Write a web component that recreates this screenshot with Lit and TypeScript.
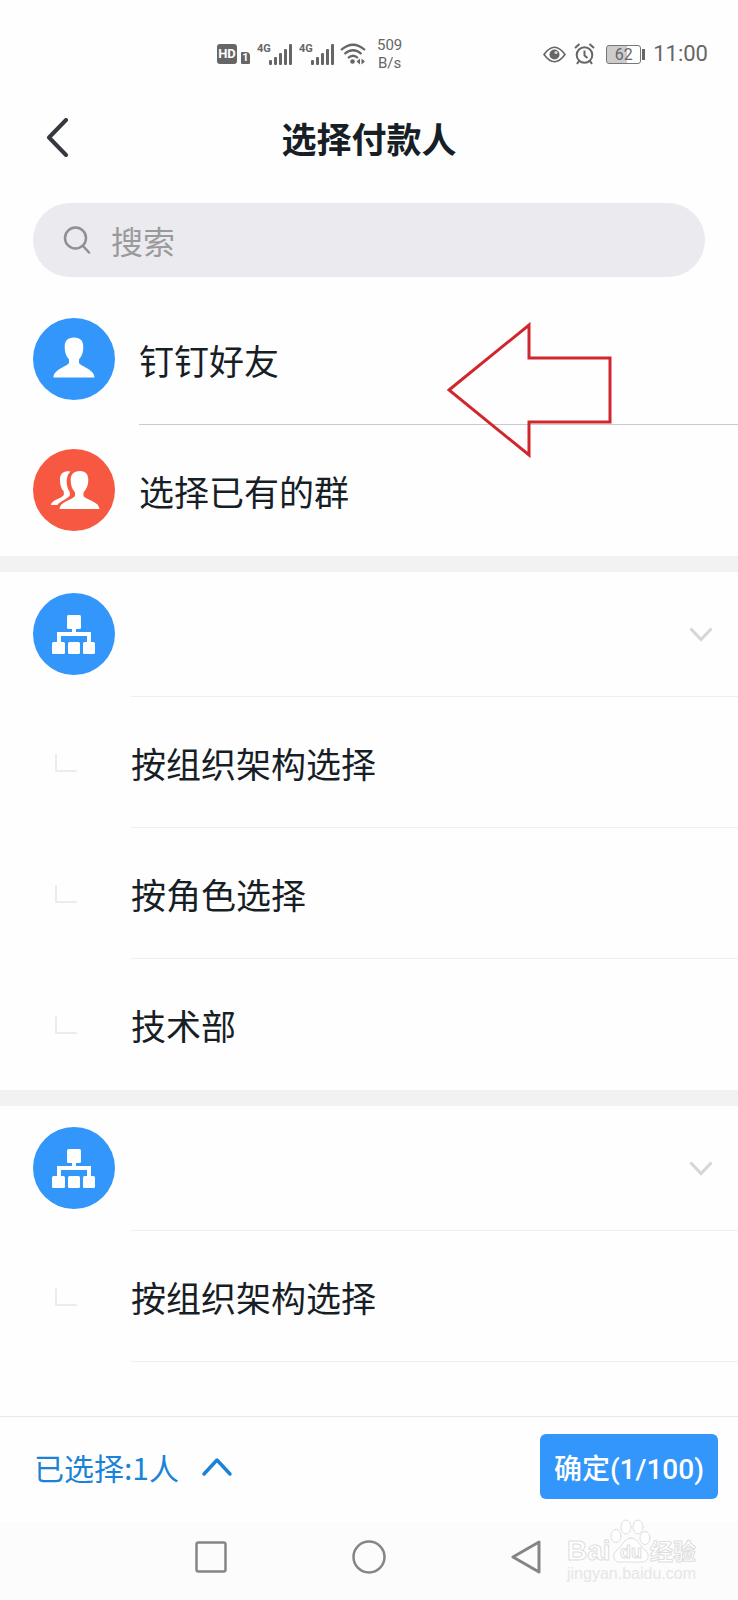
import { LitElement, html, css, svg } from "lit";
import { customElement, state } from "lit/decorators.js";

interface Group {
  id: string;
  items: string[];
}

const GROUPS: Group[] = [
  { id: "org-1", items: ["按组织架构选择", "按角色选择", "技术部"] },
  { id: "org-2", items: ["按组织架构选择"] },
];

const signalBars = svg`
  <rect x="0" y="16" width="3" height="5" rx="1" />
  <rect x="5" y="13" width="3" height="8" rx="1" />
  <rect x="10" y="9" width="3" height="12" rx="1" />
  <rect x="15" y="5" width="3" height="16" rx="1" />
  <rect x="20" y="0" width="3" height="21" rx="1" />
`;

@customElement("status-bar")
export class StatusBar extends LitElement {
  static styles = css`
    :host {
      display: flex;
      align-items: center;
      justify-content: space-between;
      height: 108px;
      padding: 0 30px 0 217px;
      box-sizing: border-box;
      color: #666;
      font-family: Roboto, sans-serif;
    }
    .side {
      display: flex;
      align-items: center;
    }
    svg {
      display: block;
      fill: currentColor;
    }
    .hd {
      display: flex;
      align-items: flex-end;
      gap: 4px;
    }
    .hd-box {
      width: 20px;
      height: 20px;
      line-height: 20px;
      border-radius: 3px;
      background: #666;
      color: #fff;
      font-size: 13px;
      font-weight: 700;
      text-align: center;
    }
    .sim {
      width: 9px;
      height: 12px;
      line-height: 12px;
      border-radius: 1px 4px 1px 1px;
      background: #666;
      color: #fff;
      font-size: 11px;
      font-weight: 700;
      text-align: center;
    }
    .signal {
      display: flex;
      margin-left: 7px;
    }
    .gen {
      width: 12px;
      font-size: 11px;
      line-height: 10px;
      font-weight: 700;
      white-space: nowrap;
    }
    .wifi {
      margin-left: 6px;
    }
    .rate {
      margin-left: 11px;
      font-size: 15px;
      line-height: 18px;
      text-align: center;
    }
    .battery {
      display: flex;
      align-items: center;
      gap: 1px;
      margin: 0 8px 0 11px;
    }
    .cell {
      width: 33px;
      height: 17px;
      line-height: 17px;
      border: 1px solid #777;
      border-radius: 3px;
      background: linear-gradient(90deg, #ccc 60%, transparent 60%);
      font-size: 16px;
      text-align: center;
    }
    .cap {
      width: 3px;
      height: 11px;
      background: #666;
    }
    .alarm {
      margin-left: 8px;
    }
    .time {
      font-size: 22px;
      line-height: 28px;
    }
  `;

  render() {
    return html`
      <div class="side">
        <div class="hd"><span class="hd-box">HD</span><span class="sim">1</span></div>
        ${[0, 1].map(
          () => html`<div class="signal">
            <span class="gen">4G</span>
            <svg width="23" height="21" viewBox="0 0 23 21">${signalBars}</svg>
          </div>`
        )}
        <svg class="wifi" width="26" height="22" viewBox="0 0 26 22">
          <g fill="none" stroke="currentColor" stroke-width="2.2">
            <path d="M1 7 Q13 -3.5 25 7" />
            <path d="M4.5 11 Q13 3.5 21.5 11" />
            <path d="M8 15 Q13 10.5 18 15" />
          </g>
          <circle cx="12.5" cy="18.500" r="2.3" />
          <path d="M20 15.500v6l-3.500-3zM21.500 15.500v6l3.500-3z" />
        </svg>
        <div class="rate">509<br />B/s</div>
      </div>
      <div class="side">
        <svg width="23" height="17" viewBox="0 0 23 17">
          <path d="M1 8.500Q11.500-6 22 8.500Q11.500 23 1 8.500z" fill="none" stroke="currentColor" stroke-width="1.6" />
          <circle cx="11.5" cy="8.5" r="5" />
          <circle cx="13" cy="6.5" r="1.5" fill="#ddd" />
        </svg>
        <svg class="alarm" width="21" height="22" viewBox="0 0 21 22">
          <g fill="none" stroke="currentColor" stroke-width="2">
            <circle cx="10.5" cy="12" r="7.8" />
            <path d="M10.500 7.500v5l3 2.500M1 5l4.500-4M20 5l-4.500-4M5 18l-2 3M16 18l2 3" />
          </g>
        </svg>
        <div class="battery"><span class="cell">62</span><span class="cap"></span></div>
        <span class="time">11:00</span>
      </div>
    `;
  }
}

@customElement("round-icon")
export class RoundIcon extends LitElement {
  static properties = { kind: { type: String } };
  declare kind: string;

  static styles = css`
    :host {
      display: block;
      flex: none;
      width: 82px;
      height: 82px;
      margin-bottom: 1px;
    }
    svg {
      display: block;
      fill: #fff;
    }
    .blue {
      fill: #3296fa;
    }
    .red {
      fill: #f65842;
    }
  `;

  private glyph() {
    if (this.kind === "friend") {
      return svg`<path d="M41 19.500c-6.500 0-9.300 3.500-9.300 9.500 0 5.500 1.300 9 4.300 12.500v3.500c-3 4-15.500 6.500-15.500 14.500h41c0-8-12.500-10.500-15.500-14.500v-3.500c3-3.500 4.300-7 4.300-12.500 0-6-2.800-9.500-9.300-9.500z" />`;
    }
    if (this.kind === "group") {
      return svg`
        <path d="M37.500 22.500c-7-1.500-11 2-10.500 9 .2 4.500 1 8 3.800 11v3.500c-2.500 4-12 4.500-13 10h6.500c3-4 9.500-5.500 12.500-9.500v-3.500c-4-5.500-4.500-16 .7-20.500z" />
        <path d="M47 22c-6.500 0-9.300 3.500-9.300 9 0 5.500 1.300 9 4.300 12.500v3.500c-3 4-15 5.500-15.500 13h40c-.5-7.500-13-9-16-13v-3.500c3-3.500 4.800-7 4.800-12.500 0-5.500-2.300-9-8.300-9z" />`;
    }
    return svg`
      <rect x="34" y="22" width="14" height="14" rx="1.5" />
      <path d="M39 35h4v4h15v11h-4v-7H28v7h-4V39h15z" />
      <rect x="19" y="49" width="13" height="12" rx="1.5" />
      <rect x="35" y="49" width="12" height="12" rx="1.5" />
      <rect x="50" y="49" width="12" height="12" rx="1.5" />`;
  }

  render() {
    return html`<svg width="82" height="82" viewBox="0 0 82 82" aria-hidden="true">
      <circle class=${this.kind === "group" ? "red" : "blue"} cx="41" cy="41" r="41" />
      ${this.glyph()}
    </svg>`;
  }
}

@customElement("app-root")
export class AppRoot extends LitElement {
  @state() private query = "";

  static styles = css`
    :host {
      display: flex;
      flex-direction: column;
      position: relative;
      min-height: 100vh;
      background: #fefefe;
      color: #171e26;
      font-family: "Noto Sans CJK SC", sans-serif;
    }
    * {
      box-sizing: border-box;
    }
    button {
      font: inherit;
      color: inherit;
      background: none;
      border: 0;
      padding: 0;
      margin: 0;
      text-align: left;
    }
    svg {
      display: block;
      fill: none;
      stroke-linecap: round;
      stroke-linejoin: round;
    }
    .header {
      display: grid;
      grid-template-columns: 80px 1fr 80px;
      align-items: center;
      height: 60px;
    }
    .back {
      padding-left: 45px;
    }
    .title {
      margin: 0;
      text-align: center;
      font-size: 35px;
      line-height: 60px;
      font-weight: 700;
    }
    .search {
      display: flex;
      align-items: center;
      gap: 20px;
      height: 74px;
      margin: 35px 33px 17px;
      padding: 0 30px;
      border-radius: 37px;
      background: #ebebef;
    }
    .search input {
      flex: 1;
      min-width: 0;
      height: 48px;
      padding: 0;
      border: 0;
      outline: 0;
      background: none;
      color: inherit;
      font: inherit;
      font-size: 32px;
    }
    .search input::placeholder {
      color: #9a9a9d;
      opacity: 1;
    }
    .list {
      flex: 1;
    }
    .row {
      display: flex;
      align-items: center;
      width: 100%;
      height: 131px;
      padding-left: 33px;
      font-size: 35px;
    }
    .label {
      flex: 1;
      align-self: stretch;
      display: flex;
      align-items: center;
      margin-left: 24px;
      border-bottom: 1px solid transparent;
    }
    .ruled {
      border-bottom-color: #cbcbcd;
    }
    .section {
      border-top: 16px solid #f2f2f2;
    }
    .head {
      height: 125px;
    }
    .head .label,
    .item .label {
      margin-left: 16px;
      border-bottom-color: #efefef;
    }
    .head .label {
      justify-content: flex-end;
      padding-right: 25px;
    }
    .item:last-child .label {
      border-bottom-color: transparent;
    }
    .section:last-child .item:last-child .label {
      border-bottom-color: #efefef;
    }
    .elbow {
      width: 82px;
      padding-left: 22px;
    }
    .footer {
      display: flex;
      align-items: center;
      justify-content: space-between;
      height: 106px;
      padding: 0 20px 6px 34px;
      border-top: 1px solid #e9e9ea;
    }
    .picked {
      display: flex;
      align-items: center;
      gap: 22px;
      color: #1a83d8;
      font-size: 30px;
    }
    .confirm {
      height: 65px;
      padding: 0 14px;
      border-radius: 6px;
      background: #3296fa;
      color: #fff;
      font-family: Roboto, "Noto Sans CJK SC", sans-serif;
      font-size: 28px;
      font-weight: 500;
    }
    .nav {
      display: grid;
      grid-template-columns: repeat(3, 158px);
      justify-content: center;
      justify-items: center;
      align-items: center;
      height: 78px;
      padding-bottom: 8px;
      background: #fcfcfc;
    }
    .pointer {
      position: absolute;
      left: 447px;
      top: 322px;
      pointer-events: none;
    }
    .mark {
      position: absolute;
      right: 36px;
      bottom: 16px;
      pointer-events: none;
    }
    .mark text {
      font-family: "Liberation Sans", "Noto Sans CJK SC", sans-serif;
    }
  `;

  private onInput(e: Event) {
    this.query = (e.target as HTMLInputElement).value;
  }

  private renderGroup(group: Group) {
    return html`<section class="section">
      <button class="row head" aria-label="展开">
        <round-icon kind="org"></round-icon>
        <span class="label">
          <svg width="24" height="18" viewBox="0 0 24 18" stroke="#d6d6d6" stroke-width="3">
            <path d="M1.500 3.500L12 14.500L22.500 3.500" stroke-linecap="butt" stroke-linejoin="miter" />
          </svg>
        </span>
      </button>
      ${group.items.map(
        (name) => html`<button class="row item">
          <span class="elbow">
            <svg width="22" height="18" viewBox="0 0 22 18" stroke="#ececec" stroke-width="2">
              <path d="M1 1v16h20" />
            </svg>
          </span>
          <span class="label">${name}</span>
        </button>`
      )}
    </section>`;
  }

  render() {
    return html`
      <status-bar></status-bar>
      <header class="header">
        <button class="back" aria-label="返回">
          <svg width="25" height="40" viewBox="0 0 25 40" stroke="#35393f" stroke-width="4">
            <path d="M21 2L4 19.500l17 17.500" />
          </svg>
        </button>
        <h1 class="title">选择付款人</h1>
      </header>
      <label class="search">
        <svg width="28" height="28" viewBox="0 0 28 28" stroke="#909092" stroke-width="2.5">
          <circle cx="12.5" cy="12" r="10.5" />
          <path d="M20 20l6 6.500" />
        </svg>
        <input type="text" placeholder="搜索" aria-label="搜索" .value=${this.query} @input=${this.onInput} />
      </label>
      <main class="list">
        <button class="row">
          <round-icon kind="friend"></round-icon><span class="label ruled">钉钉好友</span>
        </button>
        <button class="row">
          <round-icon kind="group"></round-icon><span class="label">选择已有的群</span>
        </button>
        ${GROUPS.map((g) => this.renderGroup(g))}
      </main>
      <footer class="footer">
        <button class="picked">
          已选择:1人
          <svg width="32" height="20" viewBox="0 0 32 20" stroke="#1a83d8" stroke-width="3.5">
            <path d="M3 17L16 3l13 14" />
          </svg>
        </button>
        <button class="confirm">确定(1/100)</button>
      </footer>
      <nav class="nav">
        <button aria-label="最近任务">
          <svg width="32" height="32" viewBox="0 0 32 32" stroke="#858585" stroke-width="2.5">
            <rect x="1.5" y="1.5" width="29" height="29" rx="2" />
          </svg>
        </button>
        <button aria-label="主屏幕">
          <svg width="36" height="36" viewBox="0 0 36 36" stroke="#858585" stroke-width="2.5">
            <circle cx="18" cy="18" r="15.5" />
          </svg>
        </button>
        <button aria-label="后退">
          <svg width="32" height="34" viewBox="0 0 32 34" stroke="#858585" stroke-width="3">
            <path d="M28 2v30L2 17z" />
          </svg>
        </button>
      </nav>
      <svg class="pointer" width="165" height="136" viewBox="0 0 165 136" stroke="#d0262e" stroke-width="3">
        <path d="M2 68L82 3v33h81v64H82v33z" stroke-linejoin="miter" />
      </svg>
      <svg class="mark" width="136" height="66" viewBox="0 0 136 66" stroke="#dedede" stroke-width="1">
        <text x="1" y="42" font-size="28" font-weight="700" fill="#fff">Bai</text>
        <g fill="#fff">
          <ellipse cx="50" cy="18" rx="5" ry="6.5" />
          <ellipse cx="60" cy="9" rx="5" ry="7" />
          <ellipse cx="72" cy="9" rx="5" ry="7" />
          <ellipse cx="79" cy="20" rx="5" ry="6.5" />
          <path d="M65 20c-7 0-9 9-14 12-6 5-3 13 4 12h20c7 1 10-7 4-12-5-3-7-12-14-12z" />
        </g>
        <text x="54" y="40" font-size="18" font-weight="700" fill="#fff">du</text>
        <text x="84" y="42" font-size="23" font-weight="700" fill="#fff">经验</text>
        <text x="1" y="61" font-size="16" fill="#e6e6e6" stroke="none">jingyan.baidu.com</text>
      </svg>
    `;
  }
}
